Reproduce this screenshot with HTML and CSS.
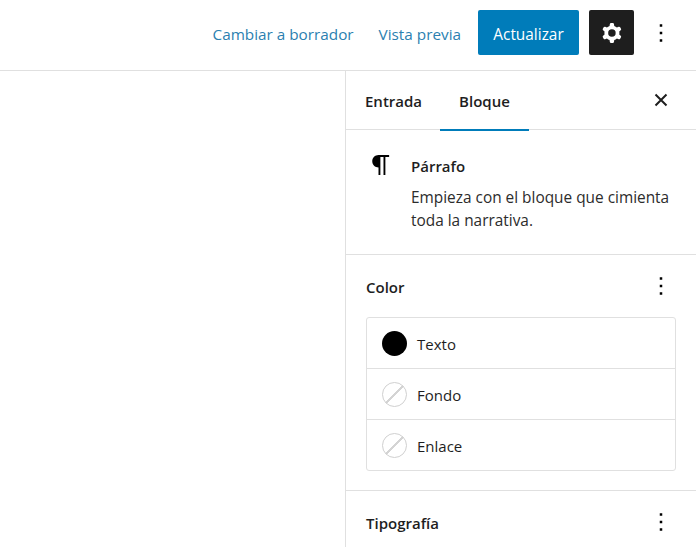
FILE: index.html
```html
<!DOCTYPE html>
<html lang="es">
<head>
    <meta charset="UTF-8">
    <meta name="viewport" content="width=device-width, initial-scale=1.0">
    <title>Editor</title>
    <link rel="stylesheet" href="styles.css">
</head>
<body>
    <header class="topbar">
        <a class="link link-draft">Cambiar a borrador</a>
        <a class="link link-preview">Vista previa</a>
        <button class="btn-update">Actualizar</button>
        <button class="btn-settings">
            <svg viewBox="0 0 24 24" width="30" height="30"><path fill="#fff" fill-rule="evenodd" d="M10.289 4.836A1 1 0 0111.275 4h1.306a1 1 0 01.987.836l.244 1.466c.787.26 1.503.679 2.108 1.218l1.393-.522a1 1 0 011.216.437l.653 1.13a1 1 0 01-.23 1.273l-1.148.944a6.025 6.025 0 010 2.435l1.149.946a1 1 0 01.23 1.272l-.653 1.13a1 1 0 01-1.216.437l-1.394-.522c-.605.54-1.32.958-2.108 1.218l-.244 1.466a1 1 0 01-.987.836h-1.306a1 1 0 01-.986-.836l-.244-1.466a5.995 5.995 0 01-2.108-1.218l-1.394.522a1 1 0 01-1.217-.436l-.653-1.131a1 1 0 01.23-1.272l1.149-.946a6.026 6.026 0 010-2.435l-1.148-.944a1 1 0 01-.23-1.272l.653-1.131a1 1 0 011.217-.437l1.393.522a5.994 5.994 0 012.108-1.218l.244-1.466zM14.929 12a3 3 0 11-6 0 3 3 0 016 0z"/></svg>
        </button>
        <button class="icon-btn">
            <svg viewBox="0 0 24 24" width="30" height="30"><path d="M13 19h-2v-2h2v2zm0-6h-2v-2h2v2zm0-6h-2V5h2v2z"/></svg>
        </button>
    </header>

    <aside class="sidebar">
        <div class="tabs">
            <div class="tab">Entrada</div>
            <div class="tab tab-active">Bloque</div>
            <button class="icon-btn tab-close">
                <svg viewBox="0 0 14 14" width="14" height="14"><path d="M1.5 1.5l11 11m0-11l-11 11" fill="none" stroke="#1e1e1e" stroke-width="2"/></svg>
            </button>
        </div>

        <section class="block-card">
            <svg class="block-icon" viewBox="0 0 24 24" width="30" height="30"><path d="m9.99609 14v-.2251l.00391.0001v6.225h1.5v-14.5h2.5v14.5h1.5v-14.5h3v-1.5h-8.50391c-2.76142 0-5 2.23858-5 5 0 2.7614 2.23858 5 5 5z"/></svg>
            <div>
                <h2 class="block-title">Párrafo</h2>
                <p class="block-desc">Empieza con el bloque que cimienta toda la narrativa.</p>
            </div>
        </section>

        <section class="panel panel-color">
            <div class="panel-head">
                <h2 class="panel-title">Color</h2>
                <button class="icon-btn">
                    <svg viewBox="0 0 24 24" width="30" height="30"><path d="M13 19h-2v-2h2v2zm0-6h-2v-2h2v2zm0-6h-2V5h2v2z"/></svg>
                </button>
            </div>
            <div class="color-list">
                <div class="color-row"><span class="swatch swatch-black"></span><span class="color-label">Texto</span></div>
                <div class="color-row"><span class="swatch swatch-none"></span><span class="color-label">Fondo</span></div>
                <div class="color-row"><span class="swatch swatch-none"></span><span class="color-label">Enlace</span></div>
            </div>
        </section>

        <section class="panel">
            <div class="panel-head">
                <h2 class="panel-title">Tipografía</h2>
                <button class="icon-btn">
                    <svg viewBox="0 0 24 24" width="30" height="30"><path d="M13 19h-2v-2h2v2zm0-6h-2v-2h2v2zm0-6h-2V5h2v2z"/></svg>
                </button>
            </div>
        </section>
    </aside>
</body>
</html>
```

FILE: styles.css
```css
* { margin: 0; padding: 0; box-sizing: border-box; }
html, body { height: 547px; overflow: hidden; }
body {
    font-family: "Open Sans", "Noto Sans", sans-serif;
    font-size: 15px;
    color: #1e1e1e;
    background: #fff;
}
button {
    border: none;
    background: none;
    font-family: inherit;
    color: inherit;
    cursor: pointer;
}
svg { display: block; }

.topbar {
    height: 71px;
    border-bottom: 1px solid #e0e0e0;
    display: flex;
    align-items: center;
    justify-content: flex-end;
    padding: 0 20px 5px 0;
}
.link { color: #2b7fb0; font-size: 15.3px; margin-top: 3px; }
.link-draft { margin-right: 25px; }
.link-preview { margin-right: 17px; }
.btn-update {
    width: 101px;
    height: 45px;
    padding-top: 3px;
    background: #007cba;
    color: #fff;
    font-size: 15.4px;
    border-radius: 2px;
    margin-right: 10px;
}
.btn-settings {
    width: 45px;
    height: 45px;
    background: #1e1e1e;
    border-radius: 2px;
    display: flex;
    align-items: center;
    justify-content: center;
    margin-right: 12px;
}
.icon-btn {
    width: 30px;
    height: 30px;
    display: flex;
    align-items: center;
    justify-content: center;
}

.sidebar {
    width: 351px;
    margin-left: auto;
    height: 476px;
    border-left: 1px solid #e0e0e0;
}
.tabs {
    height: 59px;
    border-bottom: 1px solid #e0e0e0;
    display: flex;
    padding: 0 20px 0 0;
}
.tab {
    padding: 0 19px;
    line-height: 60px;
    font-weight: 600;
    height: 59px;
}
.tab:first-child { padding-right: 18px; }
.tab-active {
    box-shadow: inset 0 -2px 0 #007cba;
    height: 60px;
}
.tab-close { margin: 14px 0 0 auto; }

.block-card {
    height: 125px;
    border-bottom: 1px solid #e0e0e0;
    display: flex;
    padding: 20px 20px 0;
    gap: 15px;
}
.block-icon { flex-shrink: 0; }
.block-title {
    font-size: 15px;
    font-weight: 600;
    line-height: 24px;
    margin: 4px 0 8px;
}
.block-desc { font-size: 15.4px; line-height: 23px; width: 270px; color: #2c2c2c; }

.panel { padding: 0 20px; }
.panel-color {
    height: 236px;
    border-bottom: 1px solid #e0e0e0;
}
.panel-head {
    height: 62px;
    display: flex;
    align-items: center;
    justify-content: space-between;
}
.panel-title { font-size: 15px; font-weight: 600; padding-top: 2px; }
.color-list {
    border: 1px solid #e0e0e0;
    border-radius: 3px;
}
.color-row {
    height: 51px;
    display: flex;
    align-items: center;
    gap: 10px;
    padding-left: 15px;
    border-bottom: 1px solid #e0e0e0;
}
.color-row:last-child { border-bottom: none; height: 50px; }
.color-label { padding-top: 2px; }
.swatch {
    width: 25px;
    height: 25px;
    border-radius: 50%;
}
.swatch-black { background: #000; }
.swatch-none {
    border: 1.5px solid #d0d0d0;
    background: linear-gradient(-45deg, transparent 47%, #d4d4d4 47%, #d4d4d4 53%, transparent 53%);
}
```
